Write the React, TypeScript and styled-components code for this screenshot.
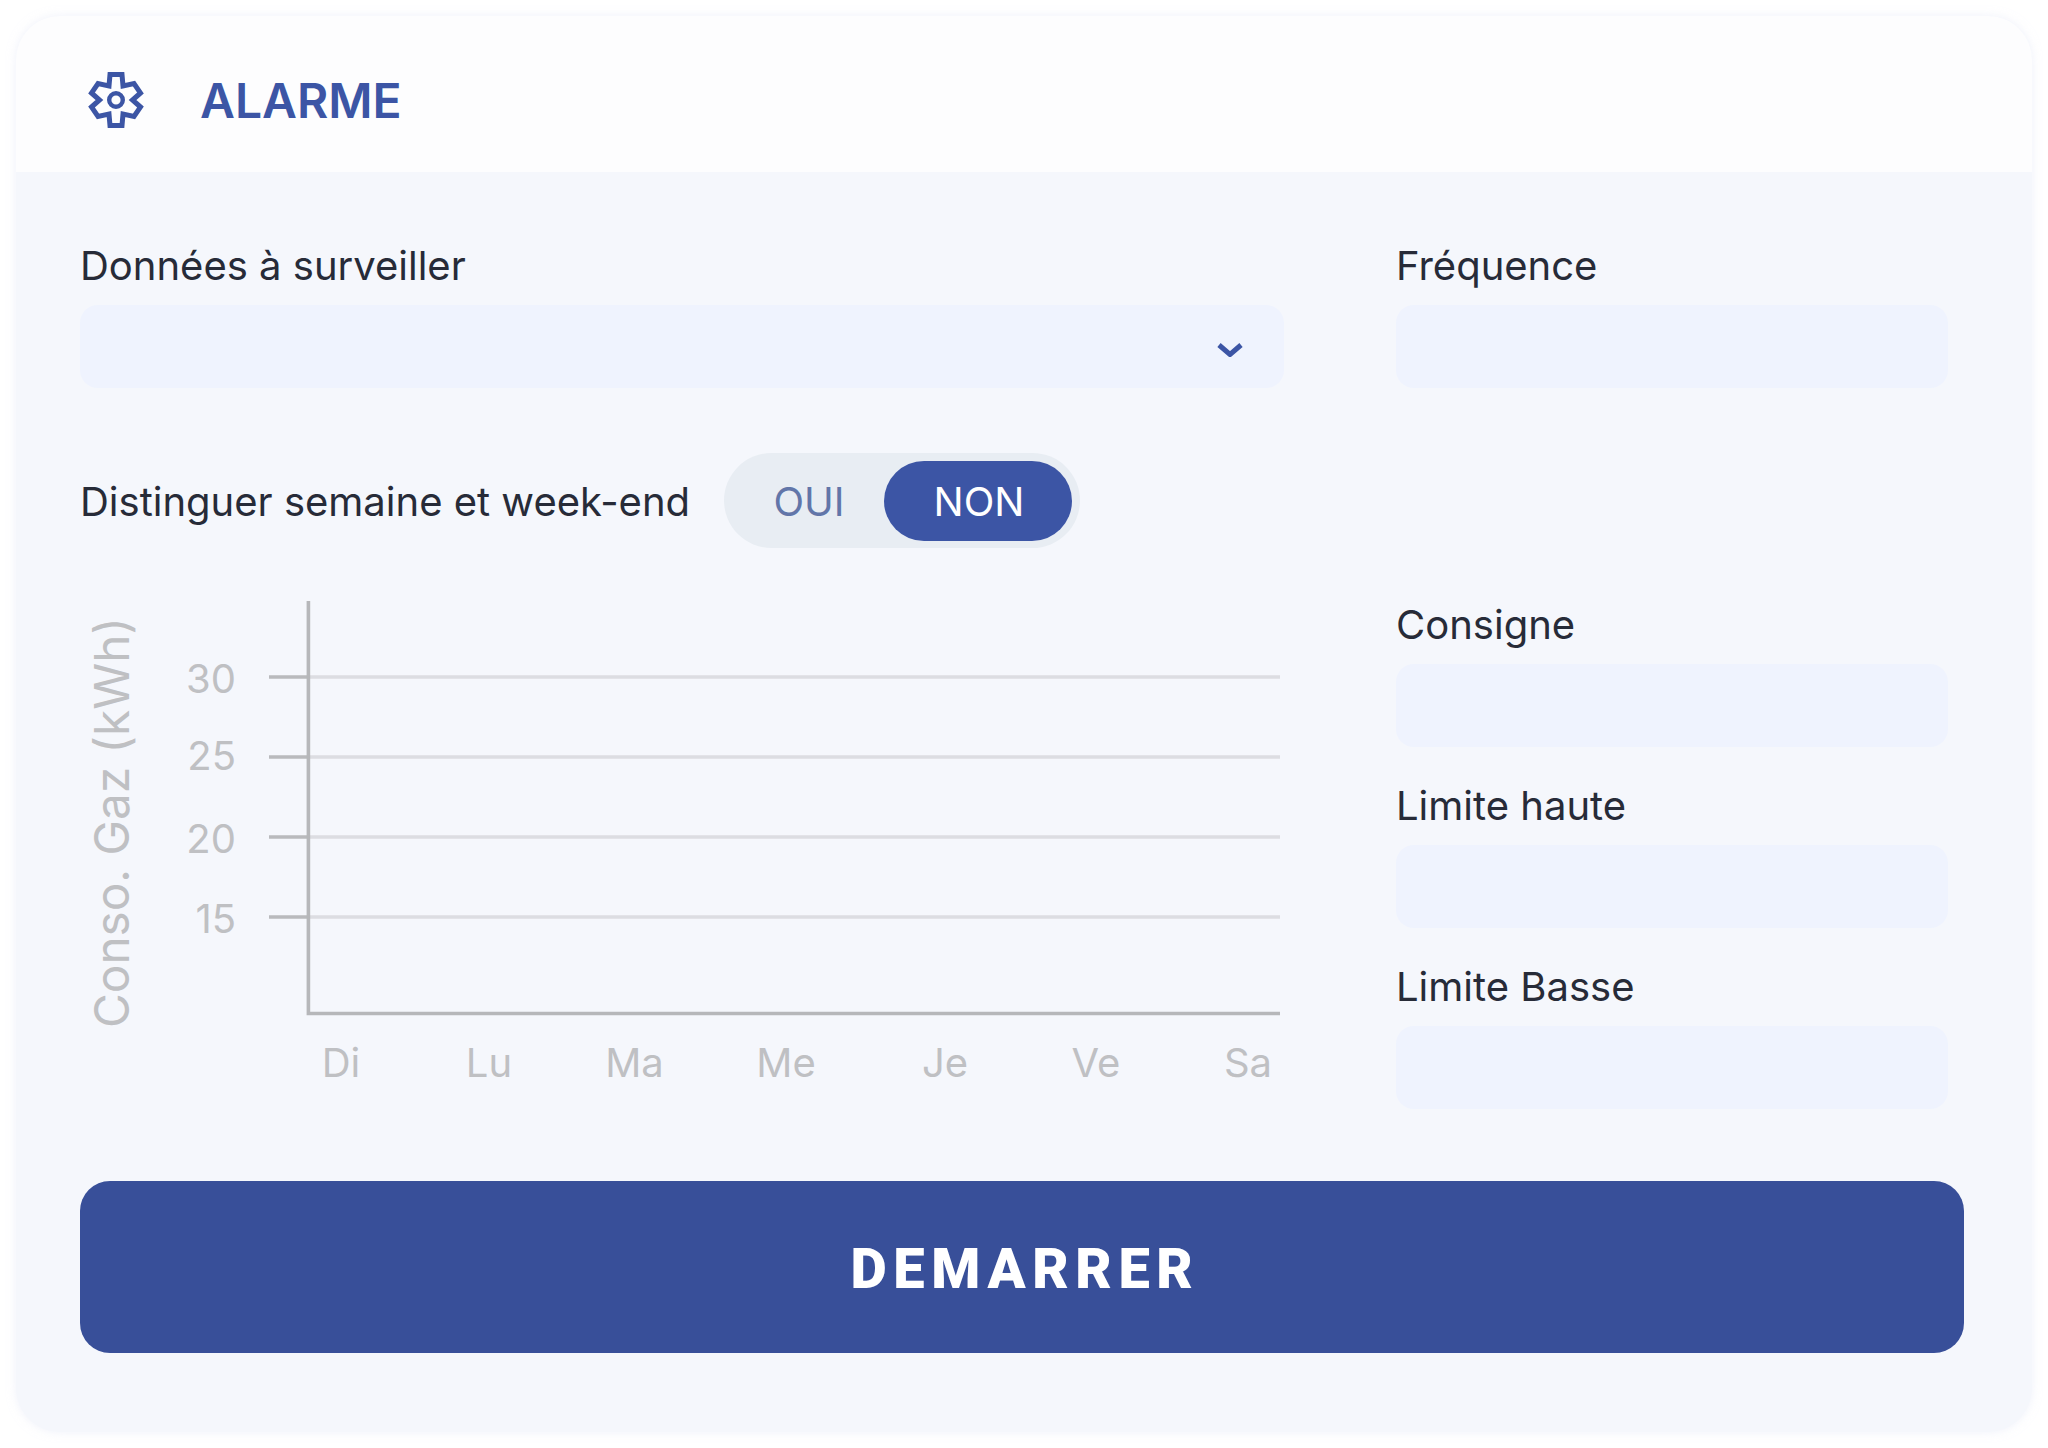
import React from "react";
import styled, { createGlobalStyle } from "styled-components";

const Global = createGlobalStyle`
  html, body { margin: 0; background: #fff; }
  body { font-family: Inter, "Liberation Sans", sans-serif; }
  #root { width: 2048px; height: 1448px; padding: 16px; box-sizing: border-box; }
`;

const Card = styled.div`
  width: 2016px;
  height: 1416px;
  border-radius: 44px;
  overflow: hidden;
  background: #f5f7fc;
  box-shadow: 0 0 10px rgba(225, 230, 245, 0.55);
`;
const Header = styled.header`
  height: 156px;
  box-sizing: border-box;
  background: #fdfdfe;
  display: flex;
  align-items: center;
  padding: 12px 0 0 71px;
  gap: 55px;
`;
const Title = styled.h1`
  margin: 0;
  font-size: 48px;
  font-weight: 600;
  color: #3c55a5;
`;
const Body = styled.div`
  padding: 70px 68px 0 64px;
`;
const Grid = styled.div`
  display: grid;
  grid-template-columns: 1204px 552px;
  column-gap: 112px;
`;
const Field = styled.div<{ $mt?: number }>`
  display: flex;
  flex-direction: column;
  margin-top: ${(p) => p.$mt ?? 0}px;
`;
const Label = styled.label`
  font-size: 40px;
  line-height: 48px;
  color: #272b38;
  height: 48px;
`;
const Input = styled.div`
  height: 83px;
  margin-top: 15px;
  border-radius: 18px;
  background: #eff3fe;
`;
const Select = styled(Input)`
  display: flex;
  justify-content: flex-end;
  align-items: center;
  padding: 6px 41px 0 0;
  box-sizing: border-box;
`;
const ToggleRow = styled.div`
  display: flex;
  align-items: center;
  gap: 34px;
  margin-top: 65px;
`;
const RowLabel = styled(Label)`
  padding-top: 2px;
`;
const Toggle = styled.div`
  width: 356px;
  height: 95px;
  box-sizing: border-box;
  border-radius: 48px;
  background: #e8edf3;
  padding: 8px;
  display: flex;
  align-items: center;
  justify-content: flex-end;
`;
const Off = styled.span`
  flex: 1;
  padding: 2px 0 0 2px;
  text-align: center;
  font-size: 40px;
  color: #6276a9;
`;
const On = styled.span`
  width: 188px;
  height: 80px;
  box-sizing: border-box;
  padding: 2px 0 0 2px;
  border-radius: 40px;
  background: #3c55a5;
  color: #fff;
  font-size: 40px;
  display: flex;
  align-items: center;
  justify-content: center;
`;
const Lower = styled(Grid)`
  margin-top: 53px;
`;
const Chart = styled.svg`
  display: block;
  width: 1204px;
  height: 509px;
  font-family: Inter, "Liberation Sans", sans-serif;
`;
const RightCol = styled.div`
  padding-top: 0;
`;
const StartButton = styled.button`
  display: block;
  width: 1884px;
  height: 172px;
  margin-top: 71px;
  padding: 4px 0 0 6px;
  border: 0;
  border-radius: 30px;
  background: #384f99;
  color: #fff;
  font-family: Roboto, Inter, "Liberation Sans", sans-serif;
  font-size: 56px;
  font-weight: 900;
  letter-spacing: 6.6px;
`;

const GEAR =
  "M110 74.5L122 74.5L123 86L134 83.5L140.5 93L132.5 100L140.5 107L134 116.5L123 114L122 125.5L110 125.5L109 114L98 116.5L91.5 107L99.5 100L91.5 93L98 83.5L109 86Z";

const grid = [
  { y: 76, label: "30", dy: 16 },
  { y: 156, label: "25", dy: 13 },
  { y: 236, label: "20", dy: 16 },
  { y: 316, label: "15", dy: 16 },
];
const days = [
  { x: 261, label: "Di" },
  { x: 409, label: "Lu" },
  { x: 554.5, label: "Ma" },
  { x: 706, label: "Me" },
  { x: 865, label: "Je" },
  { x: 1016, label: "Ve" },
  { x: 1168, label: "Sa" },
];

export default function App() {
  return (
    <>
      <Global />
      <Card>
        <Header>
          <svg width="58" height="58" viewBox="87 71 58 58" fill="none">
            <path d={GEAR} stroke="#3c55a5" strokeWidth="5" strokeLinejoin="miter" />
            <circle cx="116" cy="100" r="6.8" stroke="#3c55a5" strokeWidth="4.4" />
          </svg>
          <Title>ALARME</Title>
        </Header>
        <Body>
          <Grid>
            <Field>
              <Label>Données à surveiller</Label>
              <Select>
                <svg width="26" height="14" viewBox="0 0 26 14" fill="none">
                  <path d="M2 2L13 11.5L24 2" stroke="#3c55a5" strokeWidth="5" />
                </svg>
              </Select>
            </Field>
            <Field>
              <Label>Fréquence</Label>
              <Input />
            </Field>
          </Grid>
          <ToggleRow>
            <RowLabel as="span">Distinguer semaine et week-end</RowLabel>
            <Toggle>
              <Off>OUI</Off>
              <On>NON</On>
            </Toggle>
          </ToggleRow>
          <Lower>
            <Chart viewBox="0 0 1204 509">
              <text
                transform="translate(49 427) rotate(-90)"
                fontSize="47.7"
                fill="#bfc0c3"
              >
                Conso. Gaz (kWh)
              </text>
              {grid.map((g) => (
                <g key={g.label}>
                  <line x1="229" x2="1200" y1={g.y} y2={g.y} stroke="#dcdde2" strokeWidth="3.4" />
                  <line x1="189" x2="228" y1={g.y} y2={g.y} stroke="#b9babd" strokeWidth="3.4" />
                  <text x="156" y={g.y + g.dy} textAnchor="end" fontSize="40" fill="#bfc0c3">
                    {g.label}
                  </text>
                </g>
              ))}
              <path d="M228.4 0V412.5H1200" fill="none" stroke="#b6b7ba" strokeWidth="3.6" />
              {days.map((d) => (
                <text key={d.label} x={d.x} y="476" textAnchor="middle" fontSize="40" fill="#bfc0c3">
                  {d.label}
                </text>
              ))}
            </Chart>
            <RightCol>
              <Field>
                <Label>Consigne</Label>
                <Input />
              </Field>
              <Field $mt={35}>
                <Label>Limite haute</Label>
                <Input />
              </Field>
              <Field $mt={35}>
                <Label>Limite Basse</Label>
                <Input />
              </Field>
            </RightCol>
          </Lower>
          <StartButton>DEMARRER</StartButton>
        </Body>
      </Card>
    </>
  );
}
